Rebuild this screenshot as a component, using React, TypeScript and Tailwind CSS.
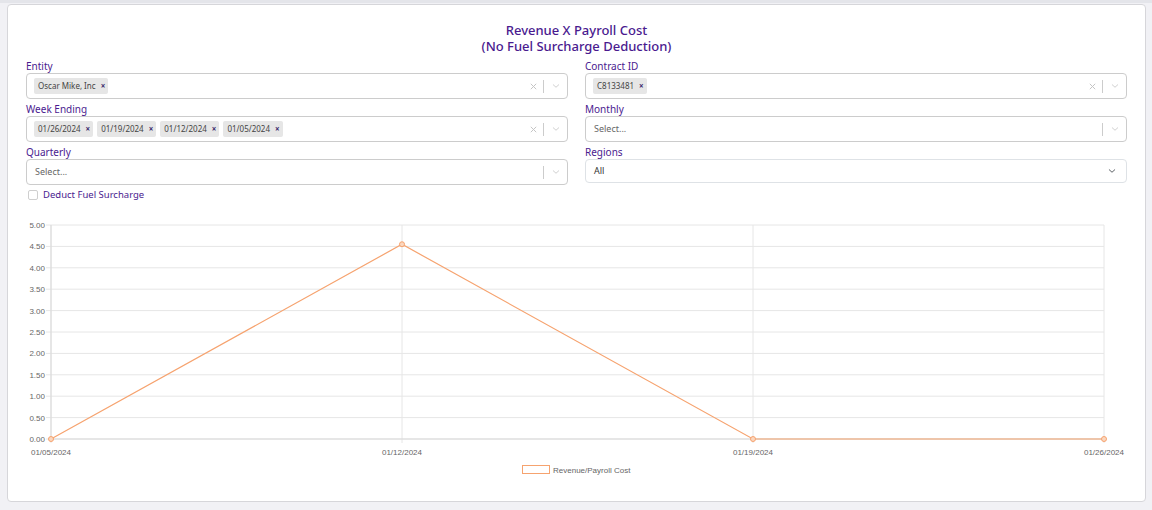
import React from 'react';

const PURPLE = 'text-[#4a1a8f]';

const ChevronDown = ({ className = '' }: { className?: string }) => (
  <svg width="10" height="10" viewBox="0 0 20 20" className={className}>
    <path d="M4.5 7.5 L10 12.5 L15.5 7.5" fill="none" stroke="currentColor" strokeWidth="1.6" strokeLinecap="round" />
  </svg>
);

const ClearX = () => (
  <svg width="9" height="9" viewBox="0 0 20 20" className="text-[#c4c4c4]">
    <path d="M4 4 L16 16 M16 4 L4 16" stroke="currentColor" strokeWidth="2.2" />
  </svg>
);

const Chip = ({ text }: { text: string }) => (
  <div className="flex items-center h-4 bg-[#e6e6e6] rounded-[2px] pl-[4px] pr-[3px] gap-[5px]">
    <span className="text-[8px] text-[#444]">{text}</span>
    <span className="text-[8px] font-bold text-[#3b2a6b] leading-none">×</span>
  </div>
);

const Field = ({
  label,
  chips,
  placeholder,
  clearable,
}: {
  label: string;
  chips?: string[];
  placeholder?: string;
  clearable?: boolean;
}) => (
  <div className="flex flex-col">
    <label className={`text-[10px] leading-[14px] ${PURPLE}`}>{label}</label>
    <div className="flex items-center h-[26px] border border-[#cccccc] rounded bg-white">
      <div className="flex-1 flex items-center gap-1 pl-[7px]">
        {chips && chips.map((c) => <Chip key={c} text={c} />)}
        {placeholder && <span className="text-[9px] text-[#666] pl-[1px]">{placeholder}</span>}
      </div>
      <div className="flex items-center h-full">
        {clearable && (
          <div className="w-5 flex justify-center">
            <ClearX />
          </div>
        )}
        <div className="w-px h-[13px] bg-[#cccccc]" />
        <div className="w-[23px] flex justify-center text-[#c4c4c4]">
          <ChevronDown />
        </div>
      </div>
    </div>
  </div>
);

const Chart = () => {
  // svg coordinates: page x - 8, page y - 212
  const left = 43;
  const right = 1096;
  const top = 12;
  const bottom = 226;
  const yTicks = [5, 4.5, 4, 3.5, 3, 2.5, 2, 1.5, 1, 0.5, 0];
  const yOf = (v: number) => bottom - (v / 5) * (bottom - top);
  const xs = [43, 394, 745, 1096];
  const labels = ['01/05/2024', '01/12/2024', '01/19/2024', '01/26/2024'];
  const values = [0, 4.55, 0, 0];
  const pts = xs.map((x, i) => `${x},${yOf(values[i])}`).join(' ');

  return (
    <svg width="1137" height="270" viewBox="0 0 1137 270" className="block">
      <g fontFamily="'Liberation Sans', Arial, sans-serif" fontSize="8" fill="#666">
        {yTicks.map((v) => (
          <g key={v}>
            <line x1={left - 5} x2={right} y1={yOf(v)} y2={yOf(v)} stroke="#e6e6e6" strokeWidth="1" />
            <text x={37} y={yOf(v) + 3} textAnchor="end">
              {v.toFixed(2)}
            </text>
          </g>
        ))}
        {xs.map((x, i) => (
          <g key={x}>
            <line x1={x} x2={x} y1={top} y2={bottom + 4} stroke="#e6e6e6" strokeWidth="1" />
            <text x={x} y={bottom + 16} textAnchor="middle">
              {labels[i]}
            </text>
          </g>
        ))}
        <line x1={left} x2={right} y1={bottom} y2={bottom} stroke="#d9d9d9" />
        <line x1={left} x2={left} y1={top} y2={bottom} stroke="#d9d9d9" />
        <polyline points={pts} fill="none" stroke="#f6a36f" strokeWidth="1.2" />
        {xs.map((x, i) => (
          <circle key={x} cx={x} cy={yOf(values[i])} r="2.5" fill="#fbd7bf" stroke="#f6a36f" strokeWidth="1" />
        ))}
        <rect x="514.5" y="252.5" width="27" height="8" fill="#fff" stroke="#f6a36f" strokeWidth="1" />
        <text x="545" y="259.5" fill="#666">
          Revenue/Payroll Cost
        </text>
      </g>
    </svg>
  );
};

export default function App() {
  return (
    <div
      className="w-[1152px] h-[510px] bg-[#f1f1f5] border-t-[3px] border-[#e4e5ea] pl-[7px] pr-[6px] pt-px"
      style={{ fontFamily: "'Noto Sans', 'Open Sans', sans-serif" }}
    >
      <div className="h-[498px] bg-white border border-[#d6d6da] rounded flex flex-col">
        <div className="px-[18px] pt-[17px]">
          <h1 className={`text-center text-[13px] leading-4 font-medium ${PURPLE}`}>
            Revenue X Payroll Cost
            <br />
            (No Fuel Surcharge Deduction)
          </h1>
          <div className="grid grid-cols-2 gap-x-[17px] gap-y-[3px] mt-[5px]">
            <Field label="Entity" chips={['Oscar Mike, Inc']} clearable />
            <Field label="Contract ID" chips={['C8133481']} clearable />
            <Field
              label="Week Ending"
              chips={['01/26/2024', '01/19/2024', '01/12/2024', '01/05/2024']}
              clearable
            />
            <Field label="Monthly" placeholder="Select..." />
            <Field label="Quarterly" placeholder="Select..." />
            <div className="flex flex-col">
              <label className={`text-[10px] leading-[14px] ${PURPLE}`}>Regions</label>
              <div className="flex items-center h-[24px] border border-[#dee2e6] rounded bg-white pl-[8px] pr-[9px]">
                <span className="flex-1 text-[9px] text-[#333]">All</span>
                <ChevronDown className="text-[#343a40]" />
              </div>
            </div>
          </div>
          <div className="flex items-center gap-[5px] mt-[3px] h-[14px] pl-[2px]">
            <div className="w-[10px] h-[10px] border border-[#cfcfcf] rounded-[2px] bg-white" />
            <span className={`text-[9.5px] ${PURPLE}`}>Deduct Fuel Surcharge</span>
          </div>
        </div>
        <div className="mt-[11px]">
          <Chart />
        </div>
      </div>
    </div>
  );
}
